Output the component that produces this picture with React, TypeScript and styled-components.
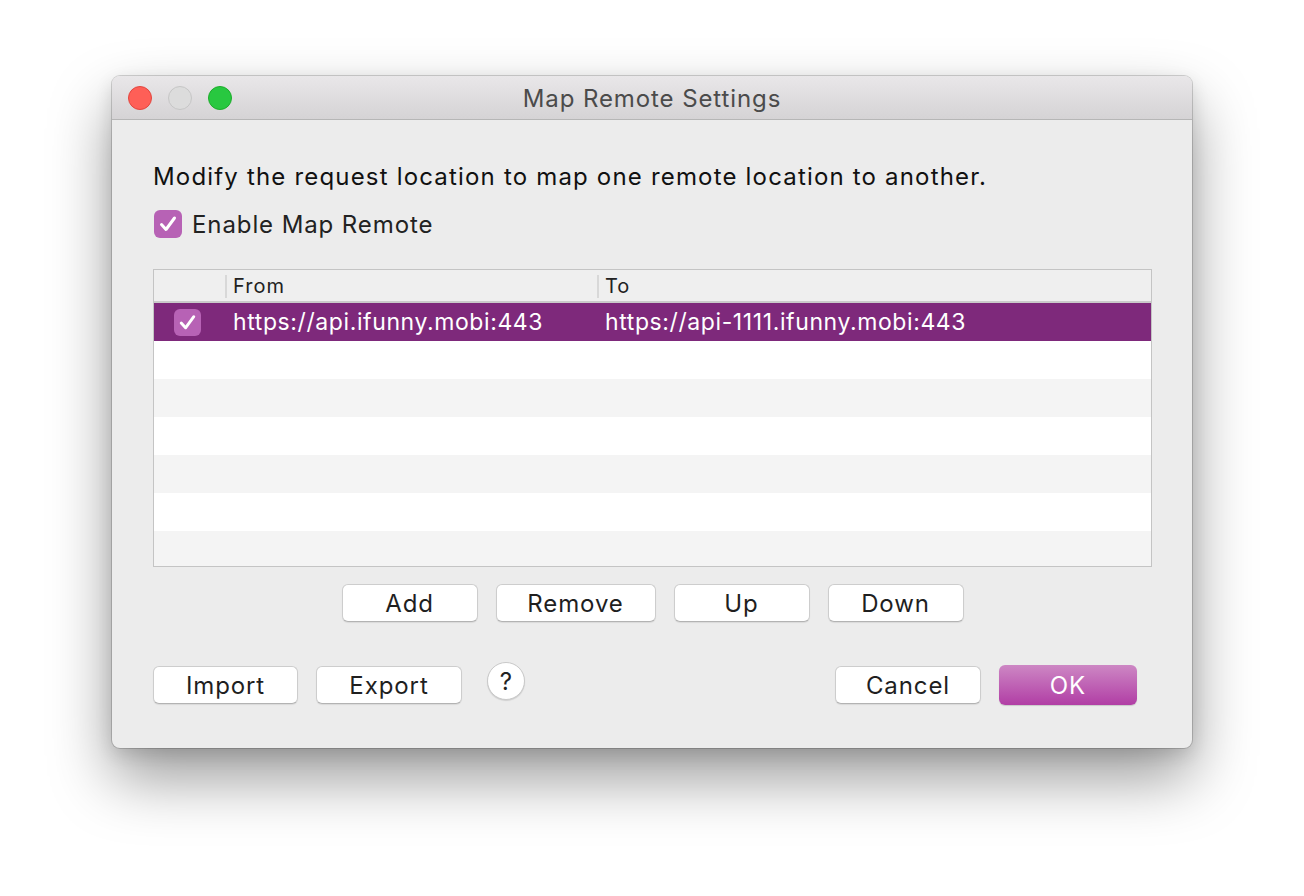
import React from "react";
import styled, { createGlobalStyle } from "styled-components";

const GlobalStyle = createGlobalStyle`
    html, body {
        margin: 0;
        padding: 0;
        background: #ffffff;
    }
    body {
        font-family: Inter, "Noto Sans", "Liberation Sans", sans-serif;
        -webkit-font-smoothing: antialiased;
    }
`;

const Page = styled.div`
    width: 1304px;
    height: 896px;
    padding: 76px 0 0 112px;
    box-sizing: border-box;
    overflow: hidden;
`;

const Window = styled.div`
    width: 1080px;
    height: 672px;
    background: #ececec;
    border-radius: 8px;
    box-shadow: 0 0 0 1px rgba(0, 0, 0, 0.16), 0 30px 62px rgba(0, 0, 0, 0.4),
        0 6px 18px rgba(0, 0, 0, 0.12);
    overflow: hidden;
    display: flex;
    flex-direction: column;
`;

const TitleBar = styled.div`
    height: 43px;
    flex: none;
    display: grid;
    grid-template-columns: 1fr auto 1fr;
    align-items: center;
    padding: 0 16px;
    background: linear-gradient(#e9e7e9, #d5d3d5);
    border-bottom: 1px solid #b6b6b6;
`;

const Lights = styled.div`
    display: flex;
    gap: 16px;
`;

const Light = styled.span<{ $fill: string; $edge: string }>`
    width: 24px;
    height: 24px;
    border-radius: 50%;
    box-sizing: border-box;
    background: ${(p) => p.$fill};
    border: 1px solid ${(p) => p.$edge};
`;

const Title = styled.div`
    font-size: 24px;
    letter-spacing: 0.9px;
    color: #4b4b4b;
    padding-top: 2px;
`;

const Content = styled.div`
    padding: 44px 40px 0 41px;
    display: flex;
    flex-direction: column;
`;

const Description = styled.div`
    font-size: 24px;
    letter-spacing: 1.18px;
    line-height: 26px;
    color: #111;
`;

const EnableRow = styled.label`
    margin-top: 20px;
    display: flex;
    align-items: center;
    gap: 10px;
    height: 28px;
    margin-left: 1px;
    font-size: 24px;
    letter-spacing: 0.9px;
    color: #222;
`;

const Check = styled.span<{ $size: number }>`
    width: ${(p) => p.$size}px;
    height: ${(p) => p.$size}px;
    flex: none;
    border-radius: 6px;
    background: #b762b5;
    display: flex;
    align-items: center;
    justify-content: center;
`;

const Table = styled.div`
    margin-top: 31px;
    height: 298px;
    border: 1px solid #c4c4c4;
    box-sizing: border-box;
    background: #ffffff;
    overflow: hidden;
`;

const columns = "71px 372px 1fr 3px";

const Header = styled.div`
    display: grid;
    grid-template-columns: ${columns};
    height: 31px;
    background: #efefef;
    border-bottom: 2px solid #cacaca;
`;

const HeadCell = styled.div<{ $divider?: boolean }>`
    display: flex;
    align-items: center;
    font-size: 20px;
    letter-spacing: 1px;
    color: #222;
    &::before {
        content: "";
        display: ${(p) => (p.$divider ? "block" : "none")};
        align-self: stretch;
        margin: 5px 6px 3px 0;
        width: 2px;
        background: #d8d8d8;
    }
`;

const Row = styled.div<{ $selected?: boolean; $striped?: boolean }>`
    display: grid;
    grid-template-columns: ${columns};
    height: 38px;
    align-items: center;
    background: ${(p) =>
        p.$selected ? "#7e297b" : p.$striped ? "#f4f4f4" : "#ffffff"};
    color: ${(p) => (p.$selected ? "#ffffff" : "#222")};
    font-size: 23px;
    letter-spacing: 0.6px;
`;

const CheckCell = styled.div`
    display: flex;
    padding-left: 20px;
`;

const Cell = styled.div`
    padding-left: 8px;
    white-space: nowrap;
`;

const ButtonRow = styled.div`
    margin-top: 17px;
    display: flex;
    justify-content: center;
    gap: 18px;
`;

const Footer = styled.div`
    margin-top: 44px;
    display: flex;
    align-items: flex-start;
    justify-content: space-between;
    padding-right: 15px;
`;

const Group = styled.div`
    display: flex;
    align-items: flex-start;
    gap: 18px;
`;

const Button = styled.button<{ $width: number }>`
    width: ${(p) => p.$width}px;
    height: 38px;
    box-sizing: border-box;
    padding: 0;
    border-radius: 6px;
    border: 1px solid #cdcdcd;
    border-bottom-color: #b3b3b3;
    background: #ffffff;
    box-shadow: 0 1px 1px rgba(0, 0, 0, 0.08);
    font-family: inherit;
    font-size: 24px;
    letter-spacing: 0.9px;
    color: #1f1f1f;
`;

const PrimaryButton = styled(Button)`
    height: 40px;
    margin-top: -1px;
    border: none;
    background: linear-gradient(#cd87c4, #b13ea5);
    box-shadow: 0 1px 1px rgba(0, 0, 0, 0.15);
    color: #ffffff;
`;

const HelpButton = styled.button`
    width: 38px;
    height: 38px;
    margin: -4px 0 0 7px;
    padding: 0;
    border-radius: 50%;
    border: 1px solid #c9c9c9;
    background: #ffffff;
    box-shadow: 0 1px 1px rgba(0, 0, 0, 0.12);
    font-family: inherit;
    font-size: 24px;
    color: #222;
`;

function Tick({ size }: { size: number }) {
    return (
        <Check $size={size}>
            <svg width={size} height={size} viewBox="0 0 28 28">
                <path
                    d="M7.5 14.5 L12 19.5 L20.5 8"
                    fill="none"
                    stroke="#ffffff"
                    strokeWidth="3"
                    strokeLinecap="round"
                    strokeLinejoin="round"
                />
            </svg>
        </Check>
    );
}

const rules = [
    {
        from: "https://api.ifunny.mobi:443",
        to: "https://api-1111.ifunny.mobi:443",
    },
];

export default function App() {
    const emptyRows = Array.from({ length: 6 }, (_, i) => i + 1);

    return (
        <>
            <GlobalStyle />
            <Page>
                <Window>
                    <TitleBar>
                        <Lights>
                            <Light $fill="#fe5f57" $edge="#e2463f" />
                            <Light $fill="#dcdcdc" $edge="#c6c6c6" />
                            <Light $fill="#28c840" $edge="#1dad2b" />
                        </Lights>
                        <Title>Map Remote Settings</Title>
                        <span />
                    </TitleBar>
                    <Content>
                        <Description>
                            Modify the request location to map one remote location to
                            another.
                        </Description>
                        <EnableRow>
                            <Tick size={28} />
                            Enable Map Remote
                        </EnableRow>
                        <Table>
                            <Header>
                                <HeadCell />
                                <HeadCell $divider>From</HeadCell>
                                <HeadCell $divider>To</HeadCell>
                                <HeadCell $divider />
                            </Header>
                            {rules.map((r) => (
                                <Row key={r.from} $selected>
                                    <CheckCell>
                                        <Tick size={27} />
                                    </CheckCell>
                                    <Cell>{r.from}</Cell>
                                    <Cell>{r.to}</Cell>
                                    <span />
                                </Row>
                            ))}
                            {emptyRows.map((i) => (
                                <Row key={i} $striped={i % 2 === 0} />
                            ))}
                        </Table>
                        <ButtonRow>
                            <Button $width={136}>Add</Button>
                            <Button $width={160}>Remove</Button>
                            <Button $width={136}>Up</Button>
                            <Button $width={136}>Down</Button>
                        </ButtonRow>
                        <Footer>
                            <Group>
                                <Button $width={145}>Import</Button>
                                <Button $width={146}>Export</Button>
                                <HelpButton>?</HelpButton>
                            </Group>
                            <Group>
                                <Button $width={146}>Cancel</Button>
                                <PrimaryButton $width={138}>OK</PrimaryButton>
                            </Group>
                        </Footer>
                    </Content>
                </Window>
            </Page>
        </>
    );
}
